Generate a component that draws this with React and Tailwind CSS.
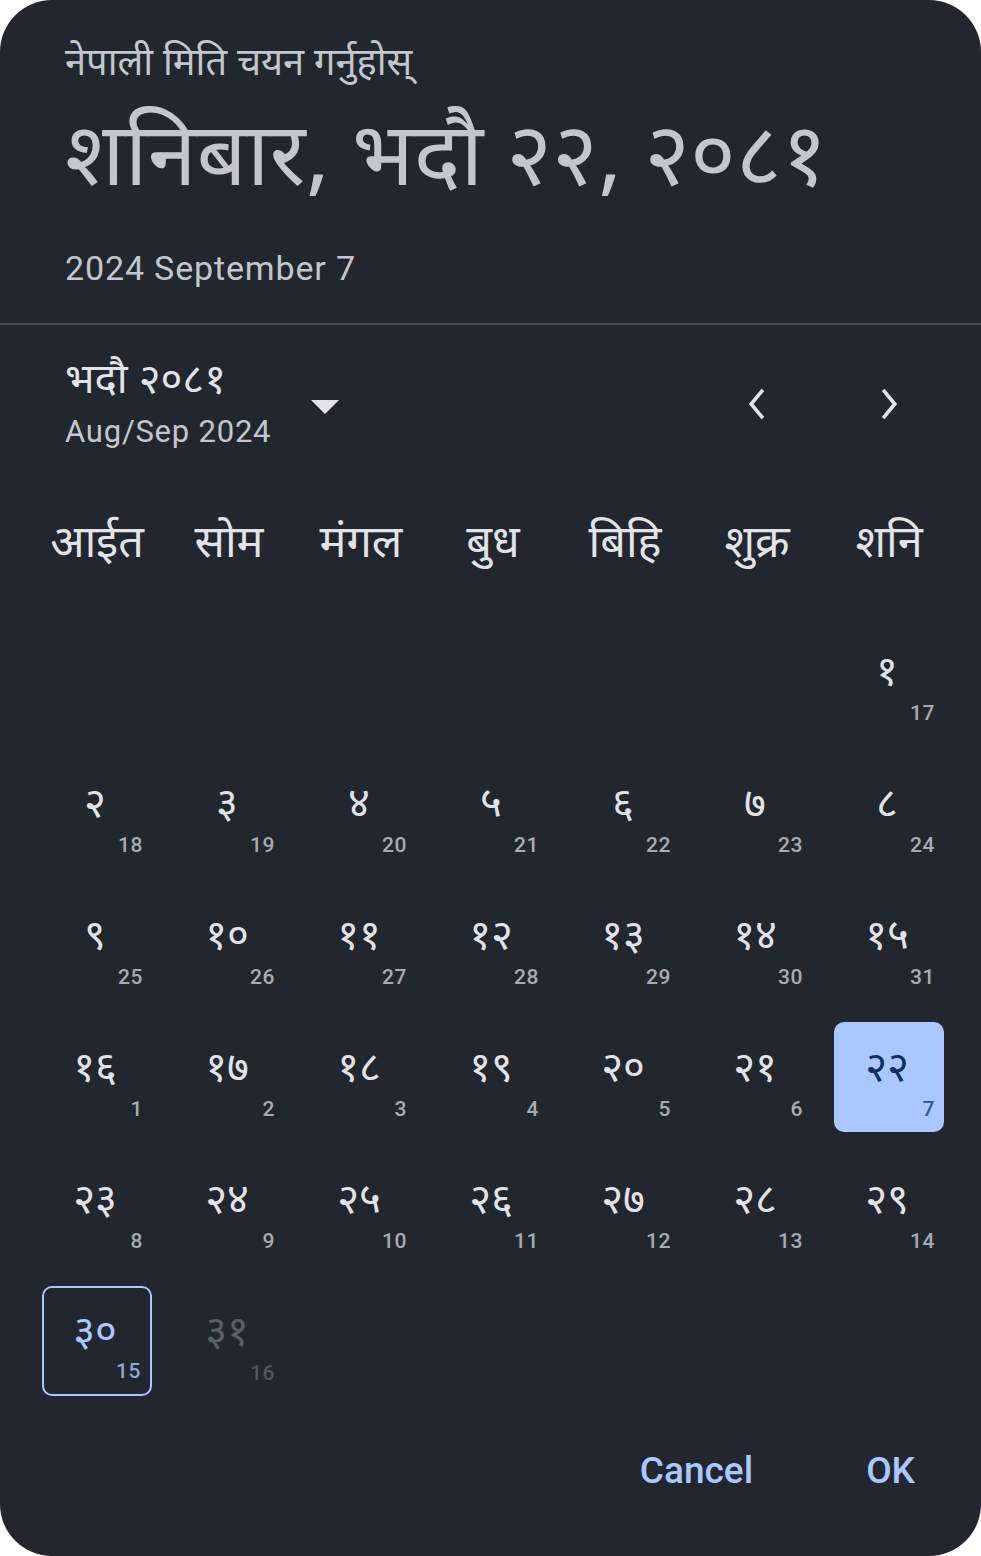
import React from "react";

const DEV = ["०", "१", "२", "३", "४", "५", "६", "७", "८", "९"];
const toDev = (n) => String(n).split("").map((d) => DEV[+d]).join("");

const weekdays = ["आईत", "सोम", "मंगल", "बुध", "बिहि", "शुक्र", "शनि"];

// Bhadra 2081 starts on Saturday (index 6), 31 days, AD 17 Aug onwards
const cells = [];
for (let i = 0; i < 6; i++) cells.push(null);
for (let d = 1; d <= 31; d++) {
    const ad = d <= 15 ? d + 16 : d - 15;
    cells.push({ d, ad });
}

const font = { fontFamily: '"Noto Sans Devanagari", "Noto Sans", Roboto, sans-serif' };
const roboto = { fontFamily: "Roboto, sans-serif" };

function Day({ cell }) {
    if (!cell) return <div className="h-[110px]" />;
    const selected = cell.d === 22;
    const today = cell.d === 30;
    const disabled = cell.d === 31;
    let box = "text-[#e2e2e9]";
    let sub = "text-[#a9abb3]";
    if (selected) {
        box = "bg-[#aac7ff] text-[#0a305f]";
        sub = "text-[#3d5a85]";
    } else if (today) {
        box = "border-2 border-[#aac7ff] text-[#aac7ff]";
        sub = "text-[#8fa7d4]";
    } else if (disabled) {
        box = "text-[#5b5e66]";
        sub = "text-[#52555c]";
    }
    return (
        <div className={`relative h-[110px] w-[110px] mx-auto rounded-[10px] flex items-center justify-center ${box}`}>
            <span className="text-[42px] leading-none -mt-[12px] -ml-[4px]" style={font}>{toDev(cell.d)}</span>
            <span className={`absolute right-[9px] bottom-[12px] text-[21px] leading-none font-medium tracking-wide ${sub}`} style={roboto}>
                {cell.ad}
            </span>
        </div>
    );
}

export default function App() {
    return (
        <div className="w-[981px] h-[1556px] bg-white">
            <div className="w-[981px] h-[1556px] bg-[#22262e] rounded-[52px] overflow-hidden flex flex-col">
                <div className="px-[65px] pt-[38px] h-[325px] border-b-2 border-[#45474d]">
                    <div className="text-[38px] leading-[56px] text-[#c4c6cf]" style={font}>नेपाली मिति चयन गर्नुहोस्</div>
                    <div className="text-[88px] leading-[110px] text-[#c4c6cf] mt-[15px]" style={font}>शनिबार, भदौ २२, २०८१</div>
                    <div className="text-[34px] mt-[24px] text-[#c4c6cf] tracking-wide" style={roboto}>2024 September 7</div>
                </div>

                <div className="flex items-center pl-[65px] pr-[72px] pt-[28px] h-[140px]">
                    <div className="flex flex-col">
                        <span className="text-[42px] leading-[50px] -mt-[8px] text-[#e2e2e9]" style={font}>भदौ २०८१</span>
                        <span className="text-[31px] leading-[40px] mt-[4px] text-[#c4c6cf] tracking-wide" style={roboto}>Aug/Sep 2024</span>
                    </div>
                    <svg className="ml-[40px] -mt-[2px]" width="28" height="16" viewBox="0 0 28 16">
                        <path d="M0 0 L28 0 L14 14 Z" fill="#e2e2e9" />
                    </svg>
                    <div className="ml-auto -mt-[10px] flex items-center gap-[92px]">
                        <svg width="40" height="40" viewBox="0 0 24 24" fill="none" stroke="#e2e2e9" strokeWidth="2.2">
                            <path d="M15.5 3.5 L8.5 12 L15.5 20.5" />
                        </svg>
                        <svg width="40" height="40" viewBox="0 0 24 24" fill="none" stroke="#e2e2e9" strokeWidth="2.2">
                            <path d="M8.5 3.5 L15.5 12 L8.5 20.5" />
                        </svg>
                    </div>
                </div>

                <div className="pl-[31px] pr-[26px]">
                    <div className="grid grid-cols-7 h-[150px] items-center">
                        {weekdays.map((w) => (
                            <div key={w} className="text-center text-[45px] mt-[14px] text-[#e2e2e9]" style={font}>{w}</div>
                        ))}
                    </div>
                    <div className="grid grid-cols-7 gap-y-[22px] pt-[11px]">
                        {cells.map((c, i) => (
                            <Day key={i} cell={c} />
                        ))}
                    </div>
                </div>

                <div className="mt-auto mb-[58px] flex justify-end items-center pr-[66px] gap-[113px]">
                    <button className="text-[37px] font-medium text-[#aac7ff]" style={roboto}>Cancel</button>
                    <button className="text-[37px] font-medium text-[#aac7ff]" style={roboto}>OK</button>
                </div>
            </div>
        </div>
    );
}
